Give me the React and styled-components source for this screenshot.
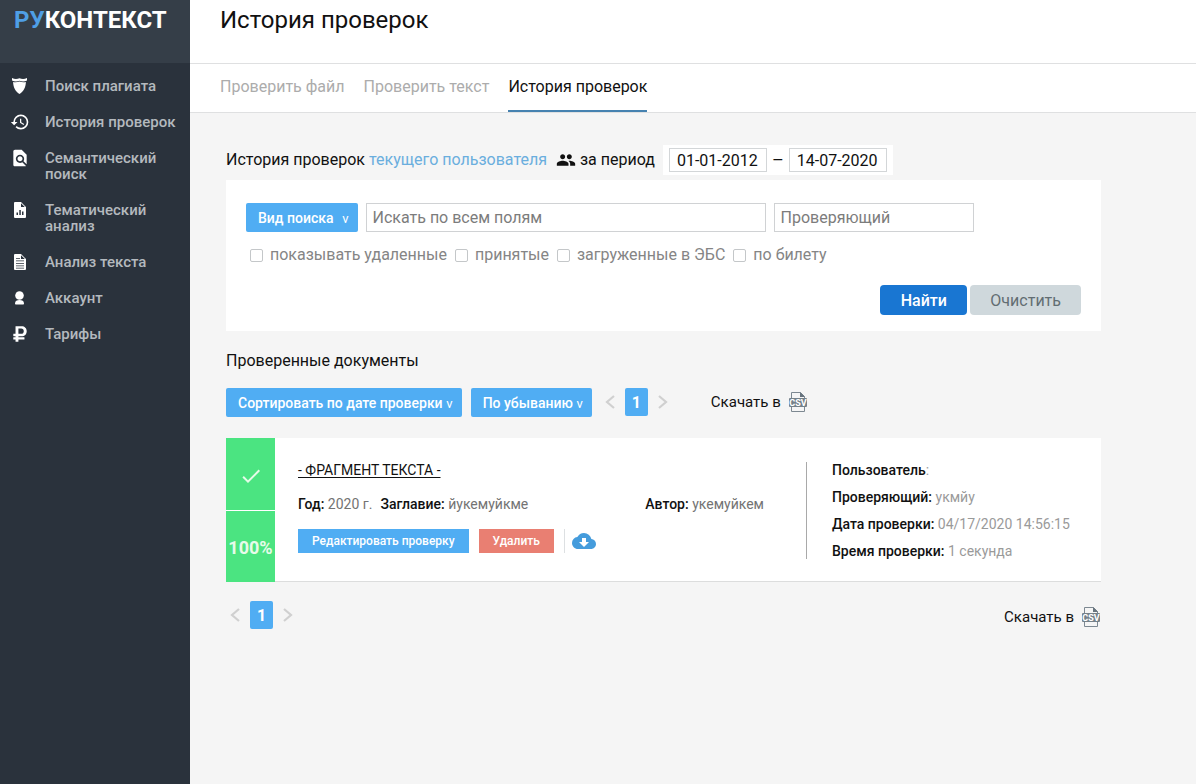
import { useState } from "react";
import styled, { createGlobalStyle } from "styled-components";
import { FaRubleSign } from "react-icons/fa";
import {
  MdCheck,
  MdCloudDownload,
  MdFindInPage,
  MdGroup,
  MdHistory,
} from "react-icons/md";

const GlobalStyle = createGlobalStyle`
  * {
    box-sizing: border-box;
  }
  body {
    margin: 0;
    background-color: #f5f5f5;
    color: #111;
    font-family: Roboto, "Liberation Sans", sans-serif;
    font-size: 16px;
    line-height: 20px;
  }
  button, input, select {
    font-family: inherit;
    margin: 0;
  }
  button, select {
    cursor: pointer;
  }
  a {
    color: inherit;
    text-decoration: none;
  }
  svg {
    display: block;
    flex: none;
  }
`;

const Layout = styled.div`
  display: flex;
  min-height: 100vh;
`;

const Sidebar = styled.aside`
  flex: none;
  width: 190px;
  background-color: #2a323c;
`;

const Logo = styled.a`
  display: block;
  height: 63px;
  padding: 6px 14px;
  background-color: #353e48;
  color: white;
  font-size: 24px;
  font-weight: 700;
  line-height: 28px;
  span {
    color: #4f9fe6;
  }
`;

const Nav = styled.nav`
  display: flex;
  flex-direction: column;
  padding-top: 5px;
`;

const NavItem = styled.a`
  display: flex;
  gap: 15px;
  padding: 10px;
  color: #b4b9be;
  font-size: 15px;
  font-weight: 500;
  line-height: 16px;
  white-space: nowrap;
  svg {
    width: 20px;
    height: 20px;
    margin: -2px 0;
    color: white;
  }
  span {
    white-space: pre-line;
  }
`;

const Main = styled.main`
  flex: 1;
  min-width: 0;
`;

const Header = styled.header`
  height: 64px;
  padding: 4px 30px;
  background-color: white;
  border-bottom: 1px solid #dfe0e1;
`;

const PageTitle = styled.h1`
  margin: 0;
  font-size: 24px;
  font-weight: 400;
  line-height: 32px;
`;

const Tabs = styled.nav`
  display: flex;
  gap: 19px;
  height: 49px;
  padding: 0 30px;
  background-color: white;
  border-bottom: 1px solid #dfe0e1;
`;

const Tab = styled.a`
  padding-top: 13px;
  color: ${(props) => (props.$active ? "#111" : "#acacac")};
  border-bottom: 2px solid ${(props) => (props.$active ? "#4682b0" : "transparent")};
`;

const Content = styled.div`
  max-width: 947px;
  padding: 32px 36px;
`;

const Period = styled.div`
  display: flex;
  align-items: center;
  height: 30px;
  a {
    margin-left: 4px;
    color: #6aaede;
  }
  svg {
    margin: 0 4px 0 9px;
  }
`;

const Dates = styled.div`
  display: flex;
  align-items: center;
  gap: 5px;
  height: 30px;
  margin-left: 8px;
  padding: 0 6px;
  background-color: white;
  span {
    font-size: 18px;
  }
`;

const DateInput = styled.input`
  width: 98px;
  height: 24px;
  padding: 0 7px;
  border: 1px solid #d3d6d8;
  background-color: white;
  color: #111;
  font-size: 16px;
`;

const Panel = styled.form`
  margin-top: 5px;
  padding: 23px 20px 16px;
  background-color: white;
`;

const Fields = styled.div`
  display: flex;
  gap: 8px;
`;

const TextInput = styled.input`
  flex: 0 1 ${(props) => props.$width}px;
  min-width: 0;
  height: 29px;
  padding: 0 6px;
  border: 1px solid #d0d2d4;
  background-color: white;
  font-size: 16px;
  &::placeholder {
    color: #7c7c7c;
  }
`;

const DropBox = styled.label`
  position: relative;
  color: white;
`;

const DropSelect = styled.select`
  appearance: none;
  field-sizing: content;
  display: block;
  height: 29px;
  padding: 0 ${(props) => (props.$wide ? 24 : 19)}px 0 12px;
  border: 0;
  border-radius: 2px;
  background-color: #50adf3;
  color: white;
  font-size: 14px;
  font-weight: 500;
`;

const Arrow = styled.span`
  position: absolute;
  top: 1px;
  right: 9px;
  font-size: 13px;
  line-height: 29px;
  pointer-events: none;
`;

const Checks = styled.div`
  display: flex;
  gap: 8px;
  margin-top: 13px;
  padding-left: 4px;
  color: #858585;
`;

const Check = styled.label`
  display: flex;
  align-items: center;
  gap: 7px;
  input {
    appearance: none;
    width: 13px;
    height: 13px;
    border: 1px solid #c4c7c9;
    border-radius: 2px;
    background-color: white;
  }
  input:checked {
    background-color: #50adf3;
  }
`;

const Actions = styled.div`
  display: flex;
  justify-content: flex-end;
  gap: 3px;
  margin-top: 20px;
`;

const ActionBtn = styled.button`
  min-width: 87px;
  height: 30px;
  padding: 0 20px;
  border: 0;
  border-radius: 4px;
  background-color: ${(props) => (props.$primary ? "#1976d2" : "#cfd8dc")};
  color: ${(props) => (props.$primary ? "white" : "#626d72")};
  font-size: 16px;
  font-weight: ${(props) => (props.$primary ? 500 : 400)};
`;

const ListTitle = styled.h2`
  margin: 20px 0 17px;
  font-size: 16px;
  font-weight: 400;
  line-height: 20px;
`;

const Toolbar = styled.div`
  display: flex;
  align-items: flex-start;
  gap: 9px;
  height: 29px;
`;

const PagerBox = styled.div`
  display: flex;
  align-items: center;
  gap: 6px;
`;

const PagerBtn = styled.button`
  display: flex;
  align-items: center;
  justify-content: center;
  width: 18px;
  height: 28px;
  padding: 0;
  border: 0;
  background: none;
  color: #d0d0d0;
`;

const PageNumber = styled.button`
  width: 23px;
  height: 28px;
  padding: 0;
  border: 0;
  border-radius: 2px;
  background-color: #50adf3;
  color: white;
  font-size: 16px;
  font-weight: 700;
`;

const Download = styled.a`
  display: flex;
  align-items: center;
  gap: 7px;
  height: 28px;
  margin-left: ${(props) => (props.$end ? "auto" : "30px")};
  font-size: 15px;
`;

const Card = styled.article`
  display: flex;
  min-height: 144px;
  margin: 21px 0 19px;
  background-color: white;
  border-bottom: 1px solid #dcdddd;
`;

const Score = styled.div`
  flex: none;
  display: grid;
  grid-template-rows: 1fr 1fr;
  gap: 1px;
  width: 49px;
  margin-bottom: -1px;
`;

const ScoreCell = styled.div`
  display: flex;
  align-items: center;
  justify-content: center;
  padding-top: 4px;
  background-color: #4be481;
  color: #e6fbe9;
  font-size: 18px;
  font-weight: 700;
`;

const Doc = styled.div`
  flex: 1;
  min-width: 0;
  padding: 22px 0 0 23px;
  font-size: 14px;
`;

const DocTitle = styled.a`
  text-decoration: underline;
  text-underline-offset: 2px;
`;

const Meta = styled.div`
  display: flex;
  gap: 8px;
  margin: 14px 42px 15px 0;
  color: #737373;
  b {
    color: #111;
    font-weight: 500;
  }
  span:last-child {
    margin-left: auto;
  }
`;

const DocActions = styled.div`
  display: flex;
  align-items: center;
`;

const DocBtn = styled.button`
  height: 24px;
  margin-right: 10px;
  padding: 0 14px;
  border: 0;
  background-color: ${(props) => (props.$danger ? "#e97f72" : "#50adf3")};
  color: white;
  font-size: 12px;
  font-weight: 500;
`;

const CloudLink = styled.a`
  padding-left: 7px;
  border-left: 1px solid #dde0e2;
  color: #459cdc;
`;

const Info = styled.div`
  flex: none;
  width: 295px;
  height: 97px;
  margin-top: 24px;
  padding-left: 25px;
  border-left: 1px solid #a9a9a9;
  color: #9a9a9a;
  font-size: 14px;
  p {
    margin: -2px 0 9px;
    line-height: 20px;
  }
  b {
    color: #111;
    font-weight: 500;
  }
`;

const Footer = styled.div`
  display: flex;
  align-items: flex-end;
  height: 30px;
  ${PagerBox} {
    align-self: flex-start;
  }
`;

const ShieldIcon = () => (
  <svg viewBox="-2 -2 20 20" fill="currentColor">
    <path d="M0 0c2.500 1.500 5.300 1.300 7.500.3C9.700 1.300 12.500 1.500 15 0v2.400C12.500 3.800 9.800 3.600 7.500 2.700 5.200 3.600 2.500 3.800 0 2.400z" />
    <path d="M1.100 4c2.200.5 4.400.3 6.400-.5 2 .8 4.200 1 6.400.5-.2 5.600-2.200 9.400-6.400 12-4.200-2.600-6.200-6.400-6.400-12z" />
  </svg>
);

const ChartFileIcon = () => (
  <svg viewBox="-2 -2 20 20" fill="currentColor">
    <path fillRule="evenodd" d="M2 1q0-1 1-1h6l5 5v10q0 1-1 1H3q-1 0-1-1zM9 1.200v3.800h3.800zM4.500 10.500V13H6v-2.500zM7.300 8v5h1.500V8zM10 9.500V13h1.500V9.500z" />
  </svg>
);

const TextFileIcon = () => (
  <svg viewBox="-2 -2 20 20" fill="currentColor">
    <path fillRule="evenodd" d="M2 1q0-1 1-1h6l5 5v10q0 1-1 1H3q-1 0-1-1zM9 1.200v3.800h3.800zM4 4v.7h4V4zM4 6.500v.7h8v-.7zM4 9v.7h8V9zM4 11.500v.7h8v-.7zM4 13.700v.7h8v-.7z" />
  </svg>
);

const AccountIcon = () => (
  <svg viewBox="-2 -2 20 20" fill="currentColor">
    <circle cx="7.500" cy="5.500" r="4.300" />
    <path d="M3 13.500c0-2.700 2-3.500 4.500-3.500s4.500.8 4.500 3.500c0 .7-.5 1-1 1H4c-.5 0-1-.3-1-1z" />
  </svg>
);

const CsvIcon = () => (
  <svg width="20" height="22" viewBox="0 0 20 22">
    <path d="M3.500 7V1.500h9l4 4V7M3.500 16v4.500h13V16" fill="none" stroke="#7d8891" />
    <path d="M12 1v5h5z" fill="#68747e" />
    <rect x="1" y="7" width="18" height="9" rx="1" fill="#75818a" />
    <text x="10" y="15" fill="white" fontFamily="Roboto, sans-serif" fontSize="9" fontWeight="700" textAnchor="middle">CSV</text>
  </svg>
);

const ArrowIcon = ({ next }) => (
  <svg width="10" height="14" viewBox="0 0 10 14" fill="none" stroke="currentColor" strokeWidth="2.200">
    <path d={next ? "M1 1l7 6-7 6" : "M9 1L2 7l7 6"} />
  </svg>
);

const menu = [
  { title: "Поиск плагиата", icon: <ShieldIcon /> },
  { title: "История проверок", icon: <MdHistory /> },
  { title: "Семантический\nпоиск", icon: <MdFindInPage /> },
  { title: "Тематический\nанализ", icon: <ChartFileIcon /> },
  { title: "Анализ текста", icon: <TextFileIcon /> },
  { title: "Аккаунт", icon: <AccountIcon /> },
  { title: "Тарифы", icon: <FaRubleSign viewBox="-30 -30 444 572" /> },
];

const tabs = ["Проверить файл", "Проверить текст", "История проверок"];

const filters = ["показывать удаленные", "принятые", "загруженные в ЭБС", "по билету"];

function Dropdown({ label, wide, options }) {
  return (
    <DropBox>
      <DropSelect aria-label={label} $wide={wide}>
        {options.map((option) => <option key={option}>{option}</option>)}
      </DropSelect>
      <Arrow aria-hidden="true">v</Arrow>
    </DropBox>
  );
}

function Pager() {
  return (
    <PagerBox>
      <PagerBtn type="button" aria-label="Назад"><ArrowIcon /></PagerBtn>
      <PageNumber type="button">1</PageNumber>
      <PagerBtn type="button" aria-label="Вперед"><ArrowIcon next /></PagerBtn>
    </PagerBox>
  );
}

function App() {
  const [from, setFrom] = useState("01-01-2012");
  const [to, setTo] = useState("14-07-2020");

  return (
    <Layout>
      <GlobalStyle />
      <Sidebar>
        <Logo href="#"><span>РУ</span>КОНТЕКСТ</Logo>
        <Nav>
          {menu.map((item) => (
            <NavItem key={item.title} href="#">
              {item.icon}
              <span>{item.title}</span>
            </NavItem>
          ))}
        </Nav>
      </Sidebar>
      <Main>
        <Header>
          <PageTitle>История проверок</PageTitle>
        </Header>
        <Tabs>
          {tabs.map((tab, i) => <Tab key={tab} href="#" $active={i === 2}>{tab}</Tab>)}
        </Tabs>
        <Content>
          <Period>
            История проверок <a href="#">текущего пользователя</a>
            <MdGroup size={20} />
            за период
            <Dates>
              <DateInput aria-label="Начало периода" value={from} onChange={(e) => setFrom(e.target.value)} />
              <span>–</span>
              <DateInput aria-label="Конец периода" value={to} onChange={(e) => setTo(e.target.value)} />
            </Dates>
          </Period>
          <Panel onSubmit={(e) => e.preventDefault()}>
            <Fields>
              <Dropdown label="Вид поиска" wide options={["Вид поиска"]} />
              <TextInput $width={400} aria-label="Поиск" placeholder="Искать по всем полям" />
              <TextInput $width={200} aria-label="Проверяющий" placeholder="Проверяющий" />
            </Fields>
            <Checks>
              {filters.map((filter) => (
                <Check key={filter}>
                  <input type="checkbox" />
                  {filter}
                </Check>
              ))}
            </Checks>
            <Actions>
              <ActionBtn $primary>Найти</ActionBtn>
              <ActionBtn type="reset">Очистить</ActionBtn>
            </Actions>
          </Panel>
          <ListTitle>Проверенные документы</ListTitle>
          <Toolbar>
            <Dropdown label="Сортировка" options={["Сортировать по дате проверки"]} />
            <Dropdown label="Порядок" options={["По убыванию", "По возрастанию"]} />
            <Pager />
            <Download href="#">Скачать в <CsvIcon /></Download>
          </Toolbar>
          <Card>
            <Score>
              <ScoreCell><MdCheck size={24} /></ScoreCell>
              <ScoreCell>100%</ScoreCell>
            </Score>
            <Doc>
              <DocTitle href="#">- ФРАГМЕНТ ТЕКСТА -</DocTitle>
              <Meta>
                <span><b>Год:</b> 2020 г.</span>
                <span><b>Заглавие:</b> йукемуйкме</span>
                <span><b>Автор:</b> укемуйкем</span>
              </Meta>
              <DocActions>
                <DocBtn>Редактировать проверку</DocBtn>
                <DocBtn $danger>Удалить</DocBtn>
                <CloudLink href="#" aria-label="Скачать"><MdCloudDownload size={24} /></CloudLink>
              </DocActions>
            </Doc>
            <Info>
              <p><b>Пользователь</b>:</p>
              <p><b>Проверяющий:</b> укмйу</p>
              <p><b>Дата проверки:</b> 04/17/2020 14:56:15</p>
              <p><b>Время проверки:</b> 1 секунда</p>
            </Info>
          </Card>
          <Footer>
            <Pager />
            <Download href="#" $end>Скачать в <CsvIcon /></Download>
          </Footer>
        </Content>
      </Main>
    </Layout>
  );
}

export default App;
